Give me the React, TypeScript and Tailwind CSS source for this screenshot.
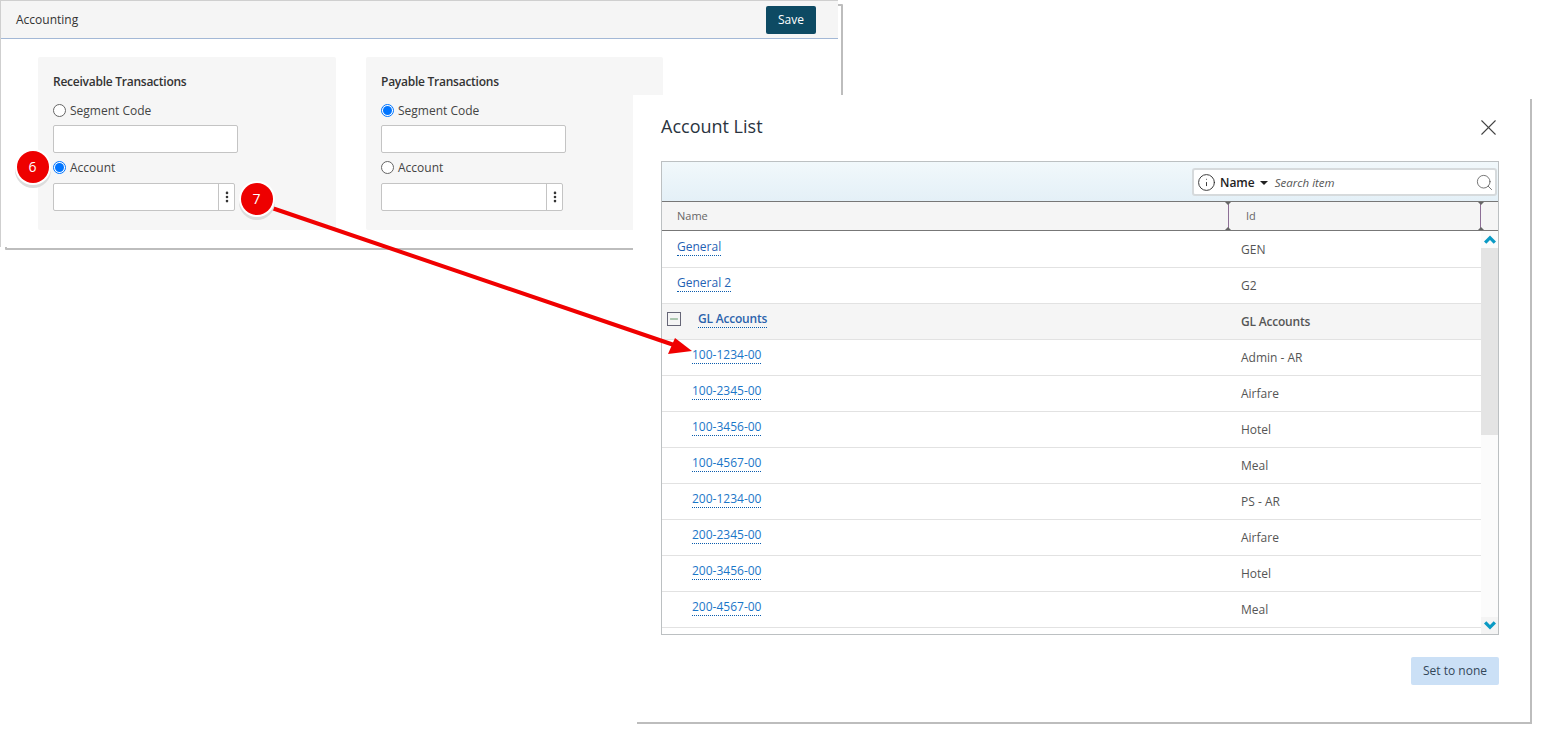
import React from "react";
import { X, Search, Info, Minus, EllipsisVertical } from "lucide-react";

const font = { fontFamily: '"Open Sans", "Noto Sans", sans-serif' };

function Radio({ on }: { on?: boolean }) {
  return on ? (
    <span className="w-[13px] h-[13px] rounded-full border border-[#0075ff] bg-white flex items-center justify-center shrink-0">
      <span className="w-[9px] h-[9px] rounded-full bg-[#0075ff]" />
    </span>
  ) : (
    <span className="w-[13px] h-[13px] rounded-full border border-[#666] bg-white shrink-0" />
  );
}

function Field({ title, first }: { title: string; first: boolean }) {
  return (
    <div className={`h-[173px] bg-[#f6f6f6] rounded-[2px] pl-[15px] pt-[16px] ${first ? "w-[298px]" : "w-[297px]"}`}>
      <div className="h-[17px] text-[12px] leading-[17px] font-semibold tracking-[-0.25px] text-[#333]">{title}</div>
      <div className="mt-[12px] h-[17px] flex items-center gap-[4px] text-[12px] text-[#444]">
        <Radio on={!first} />
        <span>Segment Code</span>
      </div>
      <div className="mt-[6px] w-[185px] h-[28px] bg-white border border-[#c4c4c4] rounded-[2px]" />
      <div className="mt-[6px] h-[17px] flex items-center gap-[4px] text-[12px] text-[#444]">
        <Radio on={first} />
        <span>Account</span>
      </div>
      <div className="mt-[7px] w-[182px] h-[28px] bg-white border border-[#c4c4c4] rounded-[2px] flex justify-end">
        <div className="w-[16px] border-l border-[#c4c4c4] flex items-center justify-center text-[#333]">
          <EllipsisVertical size={14} strokeWidth={2.5} />
        </div>
      </div>
    </div>
  );
}

function Row({ name, id, child }: { name: string; id: string; child?: boolean }) {
  return (
    <div className="h-[36px] border-b border-[#e2e2e2] flex">
      <div className={`w-[564px] h-full pt-[7px] flex items-start ${child ? "pl-[30px]" : "pl-[15px]"}`}>
        <span className={`text-[12px] leading-[16px] border-b border-dotted border-[#0b5cad] ${child ? "text-[#1b76c8]" : "text-[#1f62b4]"}`}>
          {name}
        </span>
      </div>
      <div className="flex-1 pl-[15px] pt-[9px] text-[12px] leading-[18px] text-[#555]">{id}</div>
    </div>
  );
}

function Badge({ n, className }: { n: string; className: string }) {
  return (
    <div className={`absolute w-[32px] h-[32px] rounded-full bg-[#ee0000] text-white text-[14px] pb-[2px] pr-[1px] flex items-center justify-center shadow-[0_0_0_2px_#ffffff,0_3px_0_2px_#dcdcdc] ${className}`}>
      {n}
    </div>
  );
}

function Grip({ side, edge }: { side: "l" | "r"; edge: "t" | "b" }) {
  return (
    <span
      className={`absolute w-0 h-0 border-l-[3px] border-r-[3px] border-l-transparent border-r-transparent ${
        side === "l" ? "left-[-4px]" : "right-[-4px]"
      } ${edge === "t" ? "top-0 border-t-[3px] border-t-[#666]" : "bottom-0 border-b-[3px] border-b-[#666]"}`}
    />
  );
}

function Chevron({ up }: { up?: boolean }) {
  return (
    <svg width="12" height="10" viewBox="0 0 13 10" className="shrink-0">
      <polygon
        points={up ? "6.5,0 13,6.5 10.5,9 6.5,5 2.5,9 0,6.5" : "6.5,10 13,3.5 10.5,1 6.5,5 2.5,1 0,3.5"}
        fill="#0a9ac4"
      />
    </svg>
  );
}

const rows: [string, string][] = [
  ["100-1234-00", "Admin - AR"],
  ["100-2345-00", "Airfare"],
  ["100-3456-00", "Hotel"],
  ["100-4567-00", "Meal"],
  ["200-1234-00", "PS - AR"],
  ["200-2345-00", "Airfare"],
  ["200-3456-00", "Hotel"],
  ["200-4567-00", "Meal"],
];

export default function App() {
  return (
    <div className="relative w-[1543px] h-[735px] overflow-hidden bg-white" style={font}>
      {/* back frame */}
      <div className="absolute left-[5px] top-[4px] w-[838px] h-[246px] border-2 border-[#bdbdbd] rounded-[1px]" />
      {/* Accounting panel */}
      <div className="absolute left-0 top-0 w-[838px] h-[247px] bg-white border-l border-t border-[#cfcfcf]">
        <div className="h-[38px] bg-[#f5f5f5] border-b border-[#a3b8d6] flex items-center justify-between pl-[15px] pr-[22px]">
          <span className="text-[12px] text-[#333]">Accounting</span>
          <button className="w-[50px] h-[28px] bg-[#0d4a63] text-white text-[12px] rounded-[2px]">Save</button>
        </div>
        <div className="pl-[37px] pt-[18px] flex gap-[30px]">
          <Field title="Receivable Transactions" first />
          <Field title="Payable Transactions" first={false} />
        </div>
      </div>

      {/* dialog frame */}
      <div className="absolute left-[637px] top-[99px] w-[895px] h-[625px] border-2 border-[#bdbdbd]" />
      {/* dialog */}
      <div className="absolute left-[633px] top-[95px] w-[897px] h-[627px] bg-white pl-[28px] pr-[31px] flex flex-col">
        <div className="h-[66px] flex items-center justify-between">
          <span className="text-[18px] text-[#2a3440] mb-[4px]">Account List</span>
          <X size={27} strokeWidth={0.95} className="text-[#444] mr-[-3px] mt-[-2px]" />
        </div>
        <div className="w-[838px] h-[474px] border border-[#bcc0c2] flex flex-col">
          <div className="h-[39px] shrink-0 bg-gradient-to-b from-[#f1f8fb] to-[#e4f0f7] flex items-start pt-[6px] justify-end pr-[1px]">
            <div className="w-[305px] h-[28px] bg-white border-2 border-[#d6dadc] rounded-[3px] flex items-center pl-[3px] pr-[1px]">
              <Info size={19} strokeWidth={1.2} className="text-[#333]" />
              <span className="ml-[4px] mt-[2px] text-[12px] font-semibold text-[#222]">Name</span>
              <span className="ml-[5px] mt-[1px] w-0 h-0 border-l-[4px] border-r-[4px] border-t-[4px] border-l-transparent border-r-transparent border-t-[#222]" />
              <span className="ml-[7px] mt-[2px] text-[11.5px] italic text-[#555] flex-1">Search item</span>
              <Search size={19} strokeWidth={1} className="text-[#555] mt-[1px]" />
            </div>
          </div>
          <div className="h-[30px] shrink-0 bg-[#f5f5f5] border-y border-[#777] flex text-[11px] text-[#666] items-stretch">
            <div className="w-[566px] pl-[15px] flex items-center">Name</div>
            <div className="relative w-[253px] pl-[17px] flex items-center border-x border-[#8d6f96]">
              Id
              <Grip side="l" edge="t" />
              <Grip side="l" edge="b" />
              <Grip side="r" edge="t" />
              <Grip side="r" edge="b" />
            </div>
          </div>
          <div className="flex flex-1 min-h-0">
            <div className="flex-1 min-w-0 flex flex-col pt-[1px]">
              <Row name="General" id="GEN" />
              <Row name="General 2" id="G2" />
              <div className="h-[36px] bg-[#f5f5f5] border-b border-[#e2e2e2] flex">
                <div className="w-[564px] pl-[5px] pt-[7px] flex items-start">
                  <span className="w-[14px] h-[14px] mt-[1px] border border-[#667] flex items-center justify-center text-[#2f7a3a]">
                    <Minus size={12} strokeWidth={1.5} />
                  </span>
                  <span className="ml-[17px] text-[12px] leading-[16px] font-semibold tracking-[-0.2px] text-[#2b62ac] border-b border-dotted border-[#0b5cad]">GL Accounts</span>
                </div>
                <div className="flex-1 pl-[15px] pt-[9px] text-[12px] leading-[18px] font-semibold tracking-[-0.2px] text-[#555]">GL Accounts</div>
              </div>
              {rows.map(([a, b]) => (
                <Row key={a} name={a} id={b} child />
              ))}
            </div>
            <div className="w-[17px] bg-[#fbfbfb] flex flex-col items-center">
              <div className="h-[17px] shrink-0 flex items-center justify-center">
                <Chevron up />
              </div>
              <div className="w-full h-[187px] shrink-0 bg-[#e4e4e4]" />
              <div className="mt-auto h-[17px] w-full bg-[#f4f4f4] flex items-center justify-center pb-[1px]">
                <Chevron />
              </div>
            </div>
          </div>
        </div>
        <div className="flex justify-end mt-[22px]">
          <button className="w-[88px] h-[28px] bg-[#cbe0f6] text-[#33475a] text-[12px] rounded-[2px]">Set to none</button>
        </div>
      </div>

      {/* arrow */}
      <svg className="absolute left-0 top-0 pointer-events-none" width="1543" height="735">
        <line x1="272" y1="208" x2="674" y2="345" stroke="#f00000" strokeWidth="4" />
        <polygon points="692,351 668,354 675,338" fill="#f00000" />
      </svg>
      <Badge n="6" className="left-[17px] top-[151px]" />
      <Badge n="7" className="left-[241px] top-[183px]" />
    </div>
  );
}
